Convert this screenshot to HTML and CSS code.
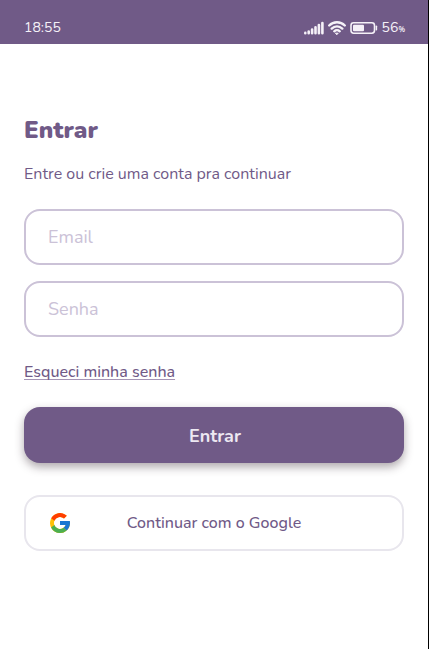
FILE: index.html
```html
<!DOCTYPE html>
<html lang="pt-BR">
<head>
<meta charset="utf-8">
<meta name="viewport" content="width=device-width, initial-scale=1">
<title>Entrar</title>
<link rel="stylesheet" href="styles.css">
</head>
<body>
<header class="status">
  <time class="clock">18:55</time>
  <div class="indicators">
    <svg class="signal" width="20" height="14" viewBox="0 0 20 14" fill="none" stroke="currentColor" stroke-linecap="round" aria-hidden="true">
      <path d="M1.300 12.200v-.3M4.700 12.200v-1.700M8.100 12.200V8.500M11.500 12.200V6.300M14.900 12.200V4.100M18.400 12.200V2" stroke-width="2.600"/>
    </svg>
    <svg class="wifi" width="18" height="14" viewBox="0 0 18 14" fill="none" stroke="currentColor" stroke-width="2.400" stroke-linecap="round" aria-hidden="true">
      <path d="M1.200 4.500C5.500 .2 12.500 .2 16.800 4.500M3.700 7.600c3-3 7.600-3 10.600 0M6.300 10.300c1.500-1.400 3.900-1.400 5.400 0"/>
      <path d="M7.800 12.200h2.400L9 13.500z" fill="currentColor" stroke-width="1"/>
    </svg>
    <svg class="battery" width="28" height="14" viewBox="0 0 28 14" aria-hidden="true">
      <rect x="1" y="1.800" width="23.500" height="10.400" rx="2.600" fill="none" stroke="currentColor" stroke-width="1.600"/>
      <rect x="3" y="3.700" width="11" height="6.600" rx="1" fill="currentColor"/>
      <path d="M26.400 5.300v3.400" stroke="currentColor" stroke-width="1.500" stroke-linecap="round"/>
    </svg>
    <span class="charge">56<small>%</small></span>
  </div>
</header>
<main class="login">
  <h1>Entrar</h1>
  <p class="lead">Entre ou crie uma conta pra continuar</p>
  <form class="form">
    <input class="box field" type="email" placeholder="Email" aria-label="Email">
    <input class="box field" type="password" placeholder="Senha" aria-label="Senha">
    <a class="forgot" href="#">Esqueci minha senha</a>
    <button class="box submit" type="submit">Entrar</button>
    <button class="box google" type="button">
      <svg width="20" height="20" viewBox="0 0 20 20" aria-hidden="true">
        <path fill="#ffc107" d="M19.800 8H10v4h5.650A6 6 0 1 1 14 5.500l2.800-2.800A10 10 0 1 0 19.800 8z"/>
        <path fill="#ff3d00" d="M1.150 5.350l3.300 2.400A6 6 0 0 1 14 5.500l2.800-2.800A10 10 0 0 0 1.150 5.350z"/>
        <path fill="#4caf50" d="M10 20a10 10 0 0 0 6.700-2.600l-3.100-2.600A6 6 0 0 1 4.350 12l-3.250 2.500A10 10 0 0 0 10 20z"/>
        <path fill="#1976d2" d="M19.800 8H10v4h5.650a6 6 0 0 1-2.050 2.800l3.100 2.600C18.600 15.600 20 13 20 10c0-.7-.1-1.300-.2-2z"/>
      </svg>
      <span>Continuar com o Google</span>
    </button>
  </form>
</main>
</body>
</html>
```
FILE: styles.css
```css
:root {
  --purple: #705a87;
  --lilac: #cbc2d7;
}

* {
  box-sizing: border-box;
}

body {
  margin: 0;
  min-height: 100vh;
  border-right: 1px solid #000;
  background: #fff;
  color: var(--purple);
  font: 16px/24px Nunito, Lato, sans-serif;
}

.status {
  display: flex;
  justify-content: space-between;
  align-items: center;
  padding: 18px 23px 6px 24px;
  background: var(--purple);
  color: #f5f1f8;
  font-size: 14px;
  line-height: 20px;
}

.indicators {
  display: flex;
  align-items: center;
  gap: 4px;
}

.charge small {
  font-size: 7px;
  font-weight: 700;
  line-height: 1;
}

.login {
  padding: 70px 24px 24px;
}

h1 {
  margin: 0;
  font-size: 24px;
  font-weight: 900;
  line-height: 32px;
}

.lead {
  margin: 16px 0 23px;
}

.form {
  display: flex;
  flex-direction: column;
  gap: 16px;
}

.box {
  width: 100%;
  height: 56px;
  border: 2px solid var(--lilac);
  border-radius: 16px;
  background: #fff;
  color: var(--purple);
  font: inherit;
}

.field {
  padding: 0 22px;
  font-size: 18px;
}

.field::placeholder {
  color: var(--lilac);
  opacity: 1;
}

.forgot {
  align-self: flex-start;
  margin: 7px 0;
  color: inherit;
  font-weight: 500;
  text-decoration-color: #a594b5;
  text-decoration-thickness: 1px;
  text-decoration-skip-ink: none;
  text-underline-offset: 2px;
}

.submit {
  padding: 2px 0 0 2px;
  border: 0;
  background: var(--purple);
  box-shadow: 0 4px 10px rgba(50, 35, 45, 0.4);
  color: #ede8f2;
  font-size: 18px;
  font-weight: 700;
}

.google {
  display: grid;
  grid-template-columns: 20px 1fr 20px;
  align-items: center;
  margin-top: 16px;
  padding: 0 24px;
  border-color: #e8e6ed;
  font-weight: 500;
}
```
